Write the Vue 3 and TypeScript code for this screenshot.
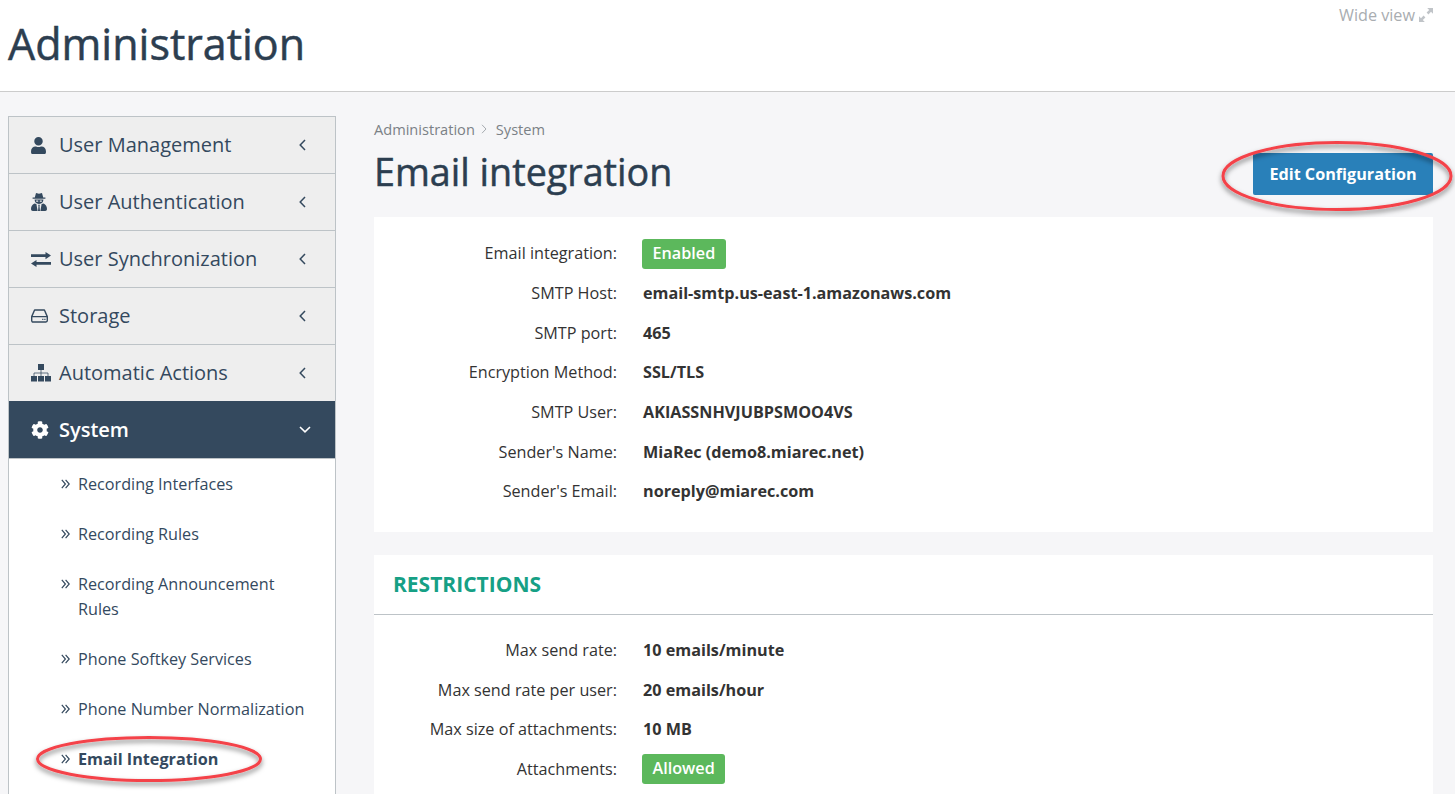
<script setup lang="ts">
interface NavItem { label: string; icon: string; }
interface Row { label: string; value: string; badge?: boolean; }

const navItems: NavItem[] = [
  { label: 'User Management', icon: 'user' },
  { label: 'User Authentication', icon: 'secret' },
  { label: 'User Synchronization', icon: 'exchange' },
  { label: 'Storage', icon: 'hdd' },
  { label: 'Automatic Actions', icon: 'sitemap' },
];
const subItems: { label: string; active?: boolean }[] = [
  { label: 'Recording Interfaces' },
  { label: 'Recording Rules' },
  { label: 'Recording Announcement Rules' },
  { label: 'Phone Softkey Services' },
  { label: 'Phone Number Normalization' },
  { label: 'Email Integration', active: true },
];
const mainRows: Row[] = [
  { label: 'Email integration:', value: 'Enabled', badge: true },
  { label: 'SMTP Host:', value: 'email-smtp.us-east-1.amazonaws.com' },
  { label: 'SMTP port:', value: '465' },
  { label: 'Encryption Method:', value: 'SSL/TLS' },
  { label: 'SMTP User:', value: 'AKIASSNHVJUBPSMOO4VS' },
  { label: "Sender's Name:", value: 'MiaRec (demo8.miarec.net)' },
  { label: "Sender's Email:", value: 'noreply@miarec.com' },
];
const restrictionRows: Row[] = [
  { label: 'Max send rate:', value: '10 emails/minute' },
  { label: 'Max send rate per user:', value: '20 emails/hour' },
  { label: 'Max size of attachments:', value: '10 MB' },
  { label: 'Attachments:', value: 'Allowed', badge: true },
];
</script>

<template>
  <div class="page">
    <header class="topbar">
      <h1 class="app-title">Administration</h1>
      <a class="wide">
        Wide view
        <svg class="wide-icon" viewBox="0 0 14 14" width="14" height="14">
          <path fill="#c0c4c8" d="M8.2 0H14v5.8l-2-2L9.4 6.4 7.6 4.6 10.2 2zM5.8 14H0V8.2l2 2 2.6-2.6 1.8 1.8L3.8 12z" />
        </svg>
      </a>
    </header>

    <div class="body">
      <aside class="sidebar">
        <div v-for="item in navItems" :key="item.label" class="nav-item">
          <span class="nav-icon">
            <svg v-if="item.icon === 'user'" viewBox="0 0 448 512" width="15" height="17">
              <path fill="currentColor" d="M224 256c70.7 0 128-57.3 128-128S294.7 0 224 0 96 57.3 96 128s57.3 128 128 128zm89.6 32h-16.7c-22.2 10.2-46.9 16-72.9 16s-50.6-5.8-72.9-16h-16.7C60.2 288 0 348.2 0 422.4V464c0 26.5 21.5 48 48 48h352c26.5 0 48-21.5 48-48v-41.6c0-74.2-60.2-134.4-134.4-134.4z" />
            </svg>
            <svg v-else-if="item.icon === 'secret'" viewBox="0 0 16 18" width="16" height="18">
              <path fill="currentColor" fill-rule="evenodd" d="M5 0 8 .8 11 0 12.2 4.4H14.4V5.8H1.6V4.4H3.8zM3.6 6.6H12.4C12.4 9.4 10.8 11 8 11S3.6 9.4 3.6 6.6zM5.2 7.6V8.8H7.2V7.6zM8.8 7.6V8.8H10.8V7.6zM3.4 10.4 5.4 11 6.6 18H1.8C.7 18 0 17.2 0 16 0 13.4 1.2 11.4 3.4 10.4zM12.6 10.4C14.8 11.4 16 13.4 16 16 16 17.2 15.3 18 14.2 18H9.4L10.6 11zM7.1 11.8H8.9L8.5 13 9 18H7L7.5 13z" />
            </svg>
            <svg v-else-if="item.icon === 'exchange'" viewBox="0 0 20 15" width="20" height="15">
              <path fill="currentColor" d="M0 2.3H14.5V0L20 3.6 14.5 7.2V5H0zM20 10H5.5V7.9L0 11.5 5.5 15V12.7H20z" />
            </svg>
            <svg v-else-if="item.icon === 'hdd'" viewBox="0 0 17 14" width="17" height="14">
              <path fill="none" stroke="currentColor" stroke-width="1.4" stroke-linejoin="round" d="M.7 7.6 3.6 1H13.4L16.3 7.6V11.6C16.3 12.5 15.7 13 14.9 13H2.1C1.3 13 .7 12.5 .7 11.6ZM.7 7.6H16.3" />
              <path fill="currentColor" d="M11.2 9.8h1.2v1.2h-1.2zM13.3 9.8h1.2v1.2h-1.2z" />
            </svg>
            <svg v-else viewBox="0 0 20 17.5" width="20" height="17.5">
              <path fill="none" stroke="currentColor" stroke-width="1" opacity="0.75" d="M10 6V12M3 12V9H17V12" />
              <path fill="currentColor" d="M7 0H13V6H7zM0 12H6V17.5H0zM7 12H13V17.5H7zM14 12H20V17.5H14z" />
            </svg>
          </span>
          <span class="nav-label">{{ item.label }}</span>
          <svg class="chev" viewBox="0 0 7 12" width="7" height="12">
            <path fill="none" stroke="currentColor" stroke-width="1.5" d="M6 1 1.2 6 6 11" />
          </svg>
        </div>

        <div class="nav-item nav-active">
          <span class="nav-icon">
            <svg viewBox="0 0 512 512" width="18" height="18">
              <path fill="currentColor" d="M487.4 315.7l-42.6-24.6c4.3-23.2 4.3-47 0-70.2l42.6-24.6c4.9-2.8 7.1-8.6 5.5-14-11.1-35.6-30-67.8-54.7-94.6-3.8-4.1-10-5.1-14.8-2.3L380.8 110c-17.9-15.4-38.5-27.3-60.8-35.1V25.8c0-5.6-3.9-10.5-9.4-11.7-36.7-8.2-74.3-7.8-109.2 0-5.5 1.2-9.4 6.1-9.4 11.7V75c-22.2 7.9-42.8 19.8-60.8 35.1L88.7 85.5c-4.9-2.8-11-1.9-14.8 2.3-24.7 26.7-43.6 58.9-54.7 94.6-1.7 5.4.6 11.2 5.5 14L67.3 221c-4.3 23.2-4.3 47 0 70.2l-42.6 24.6c-4.9 2.8-7.1 8.6-5.5 14 11.1 35.6 30 67.8 54.7 94.6 3.8 4.1 10 5.1 14.8 2.3l42.6-24.6c17.9 15.4 38.5 27.3 60.8 35.1v49.2c0 5.6 3.9 10.5 9.4 11.7 36.7 8.2 74.3 7.8 109.2 0 5.5-1.2 9.4-6.1 9.4-11.7v-49.2c22.2-7.9 42.8-19.8 60.8-35.1l42.6 24.6c4.9 2.8 11 1.9 14.8-2.3 24.7-26.7 43.6-58.9 54.7-94.6 1.5-5.5-.7-11.3-5.6-14.1zM256 336c-44.1 0-80-35.9-80-80s35.9-80 80-80 80 35.9 80 80-35.9 80-80 80z" />
            </svg>
          </span>
          <span class="nav-label">System</span>
          <svg class="chev-down" viewBox="0 0 12 7" width="12" height="7">
            <path fill="none" stroke="currentColor" stroke-width="1.6" d="M1 1 6 5.8 11 1" />
          </svg>
        </div>

        <ul class="sub-list">
          <li v-for="s in subItems" :key="s.label" class="sub-item" :class="{ 'sub-active': s.active }">
            <span class="bullet">
              <svg viewBox="0 0 9 10" width="9" height="10">
                <path fill="none" stroke="#34495e" stroke-width="1.2" d="M.8 .8 4.4 5 .8 9.2M4.6 .8 8.2 5 4.6 9.2" />
              </svg>
            </span>
            <span class="sub-label">{{ s.label }}</span>
          </li>
        </ul>
      </aside>

      <main class="content">
        <div class="crumbs">
          <span>Administration</span>
          <svg viewBox="0 0 6 10" width="6" height="10" class="crumb-sep">
            <path fill="none" stroke="#a6abb0" stroke-width="1" d="M1 .8 5 5 1 9.2" />
          </svg>
          <span>System</span>
        </div>
        <div class="title-row">
          <h2 class="page-title">Email integration</h2>
          <button class="edit-btn">Edit Configuration</button>
        </div>

        <section class="panel panel-main">
          <div v-for="r in mainRows" :key="r.label" class="row">
            <span class="row-label">{{ r.label }}</span>
            <span v-if="r.badge" class="badge">{{ r.value }}</span>
            <span v-else class="row-value">{{ r.value }}</span>
          </div>
        </section>

        <section class="panel panel-last">
          <h3 class="panel-head">RESTRICTIONS</h3>
          <div class="panel-rows">
            <div v-for="r in restrictionRows" :key="r.label" class="row">
              <span class="row-label">{{ r.label }}</span>
              <span v-if="r.badge" class="badge">{{ r.value }}</span>
              <span v-else class="row-value">{{ r.value }}</span>
            </div>
          </div>
        </section>
      </main>
    </div>

    <svg class="annot" width="1455" height="794" viewBox="0 0 1455 794">
      <defs>
        <filter id="sh" x="-10%" y="-30%" width="120%" height="170%">
          <feDropShadow dx="0" dy="3" stdDeviation="2.5" flood-color="#000" flood-opacity="0.5" />
        </filter>
      </defs>
      <ellipse cx="1337" cy="176" rx="114" ry="33.5" fill="none" stroke="#f4434a" stroke-width="3" filter="url(#sh)" />
      <ellipse cx="149" cy="759" rx="111.5" ry="21.5" fill="none" stroke="#f4434a" stroke-width="3" filter="url(#sh)" />
    </svg>
  </div>
</template>

<style>
html, body { margin: 0; background: #f6f6f8; }
</style>

<style scoped>
.page {
  position: relative;
  height: 794px;
  overflow: hidden;
  background: #f6f6f8;
  font-family: "Open Sans", "Noto Sans", sans-serif;
  font-size: 16.2px;
  color: #333;
}
.topbar {
  position: relative;
  height: 91px;
  background: #fff;
  border-bottom: 1px solid #ccc;
  padding-left: 8px;
}
.app-title {
  margin: 0;
  padding-top: 15px;
  font-size: 43px;
  line-height: 58px;
  font-weight: 500;
  -webkit-text-stroke: 0.5px #2c3e50;
  color: #2c3e50;
}
.wide {
  position: absolute;
  top: 5px;
  right: 22px;
  display: flex;
  align-items: center;
  gap: 4px;
  line-height: 20px;
  color: #a9adb1;
}
.wide-icon { display: block; }
.body {
  display: flex;
  align-items: flex-start;
  padding: 24px 22px 0 8px;
  gap: 38px;
}
.sidebar {
  flex: 0 0 328px;
  box-sizing: border-box;
  min-height: 700px;
  border: 1px solid #bdc3c7;
  background: #fff;
}
.nav-item {
  box-sizing: border-box;
  height: 57px;
  display: flex;
  align-items: center;
  background: #eee;
  border-bottom: 1px solid #bdc3c7;
  padding-left: 22px;
  color: #34495e;
  font-size: 20px;
}
.nav-icon {
  flex: 0 0 28px;
  display: flex;
  align-items: center;
}
.nav-icon svg { display: block; }
.nav-label { flex: 1; margin-top: -2px; }
.chev { margin-right: 29px; display: block; }
.chev-down { margin-right: 24px; display: block; }
.nav-active {
  height: 58px;
  margin-top: -1px;
  background: #34495e;
  color: #fff;
  font-weight: 600;
}
.nav-active .nav-label { margin-top: 0; }
.sub-list {
  list-style: none;
  margin: 0;
  padding: 0;
}
.sub-item {
  display: flex;
  padding: 12.5px 20px 12.5px 52px;
  line-height: 25px;
  color: #34495e;
}
.bullet {
  flex: 0 0 17px;
  padding-top: 7.5px;
}
.bullet svg { display: block; }
.sub-active { font-weight: 700; }
.content { flex: 1; min-width: 0; }
.crumbs {
  display: flex;
  align-items: center;
  height: 26px;
  font-size: 14.6px;
  color: #7b8186;
}
.crumb-sep { display: block; margin: 0 9px 0 6px; }
.title-row {
  display: flex;
  justify-content: space-between;
  align-items: flex-start;
  height: 75px;
}
.page-title {
  margin: 8px 0 0;
  font-size: 37.7px;
  line-height: 44px;
  font-weight: 500;
  -webkit-text-stroke: 0.5px #2c3e50;
  color: #2c3e50;
}
.edit-btn {
  margin-top: 11px;
  width: 180px;
  height: 42px;
  padding: 0;
  border: 0;
  border-radius: 2px;
  background: #2980b9;
  color: #fff;
  font-family: inherit;
  font-size: 16.2px;
  font-weight: 700;
}
.panel {
  background: #fff;
  margin-bottom: 23px;
}
.panel-main { padding: 16.5px 0 20.5px; }
.panel-last { padding-bottom: 30px; }
.panel-head {
  margin: 0;
  height: 60px;
  box-sizing: border-box;
  border-bottom: 1px solid #bdc3c7;
  padding-left: 19px;
  font-size: 21px;
  line-height: 58px;
  font-weight: 700;
  color: #16a085;
}
.panel-rows { padding-top: 15.5px; }
.row {
  display: flex;
  align-items: center;
  height: 39.67px;
}
.row-label {
  flex: 0 0 243px;
  text-align: right;
  margin-right: 26px;
  color: #333;
}
.row-value {
  font-weight: 700;
  color: #333;
}
.badge {
  display: inline-block;
  box-sizing: border-box;
  height: 30px;
  line-height: 29px;
  margin: 1px 0 0 -1px;
  padding: 0 10.5px;
  border-radius: 3px;
  background: #5cb85c;
  color: #fff;
  font-weight: 600;
}
.annot {
  position: absolute;
  left: 0;
  top: 0;
  pointer-events: none;
}
</style>
